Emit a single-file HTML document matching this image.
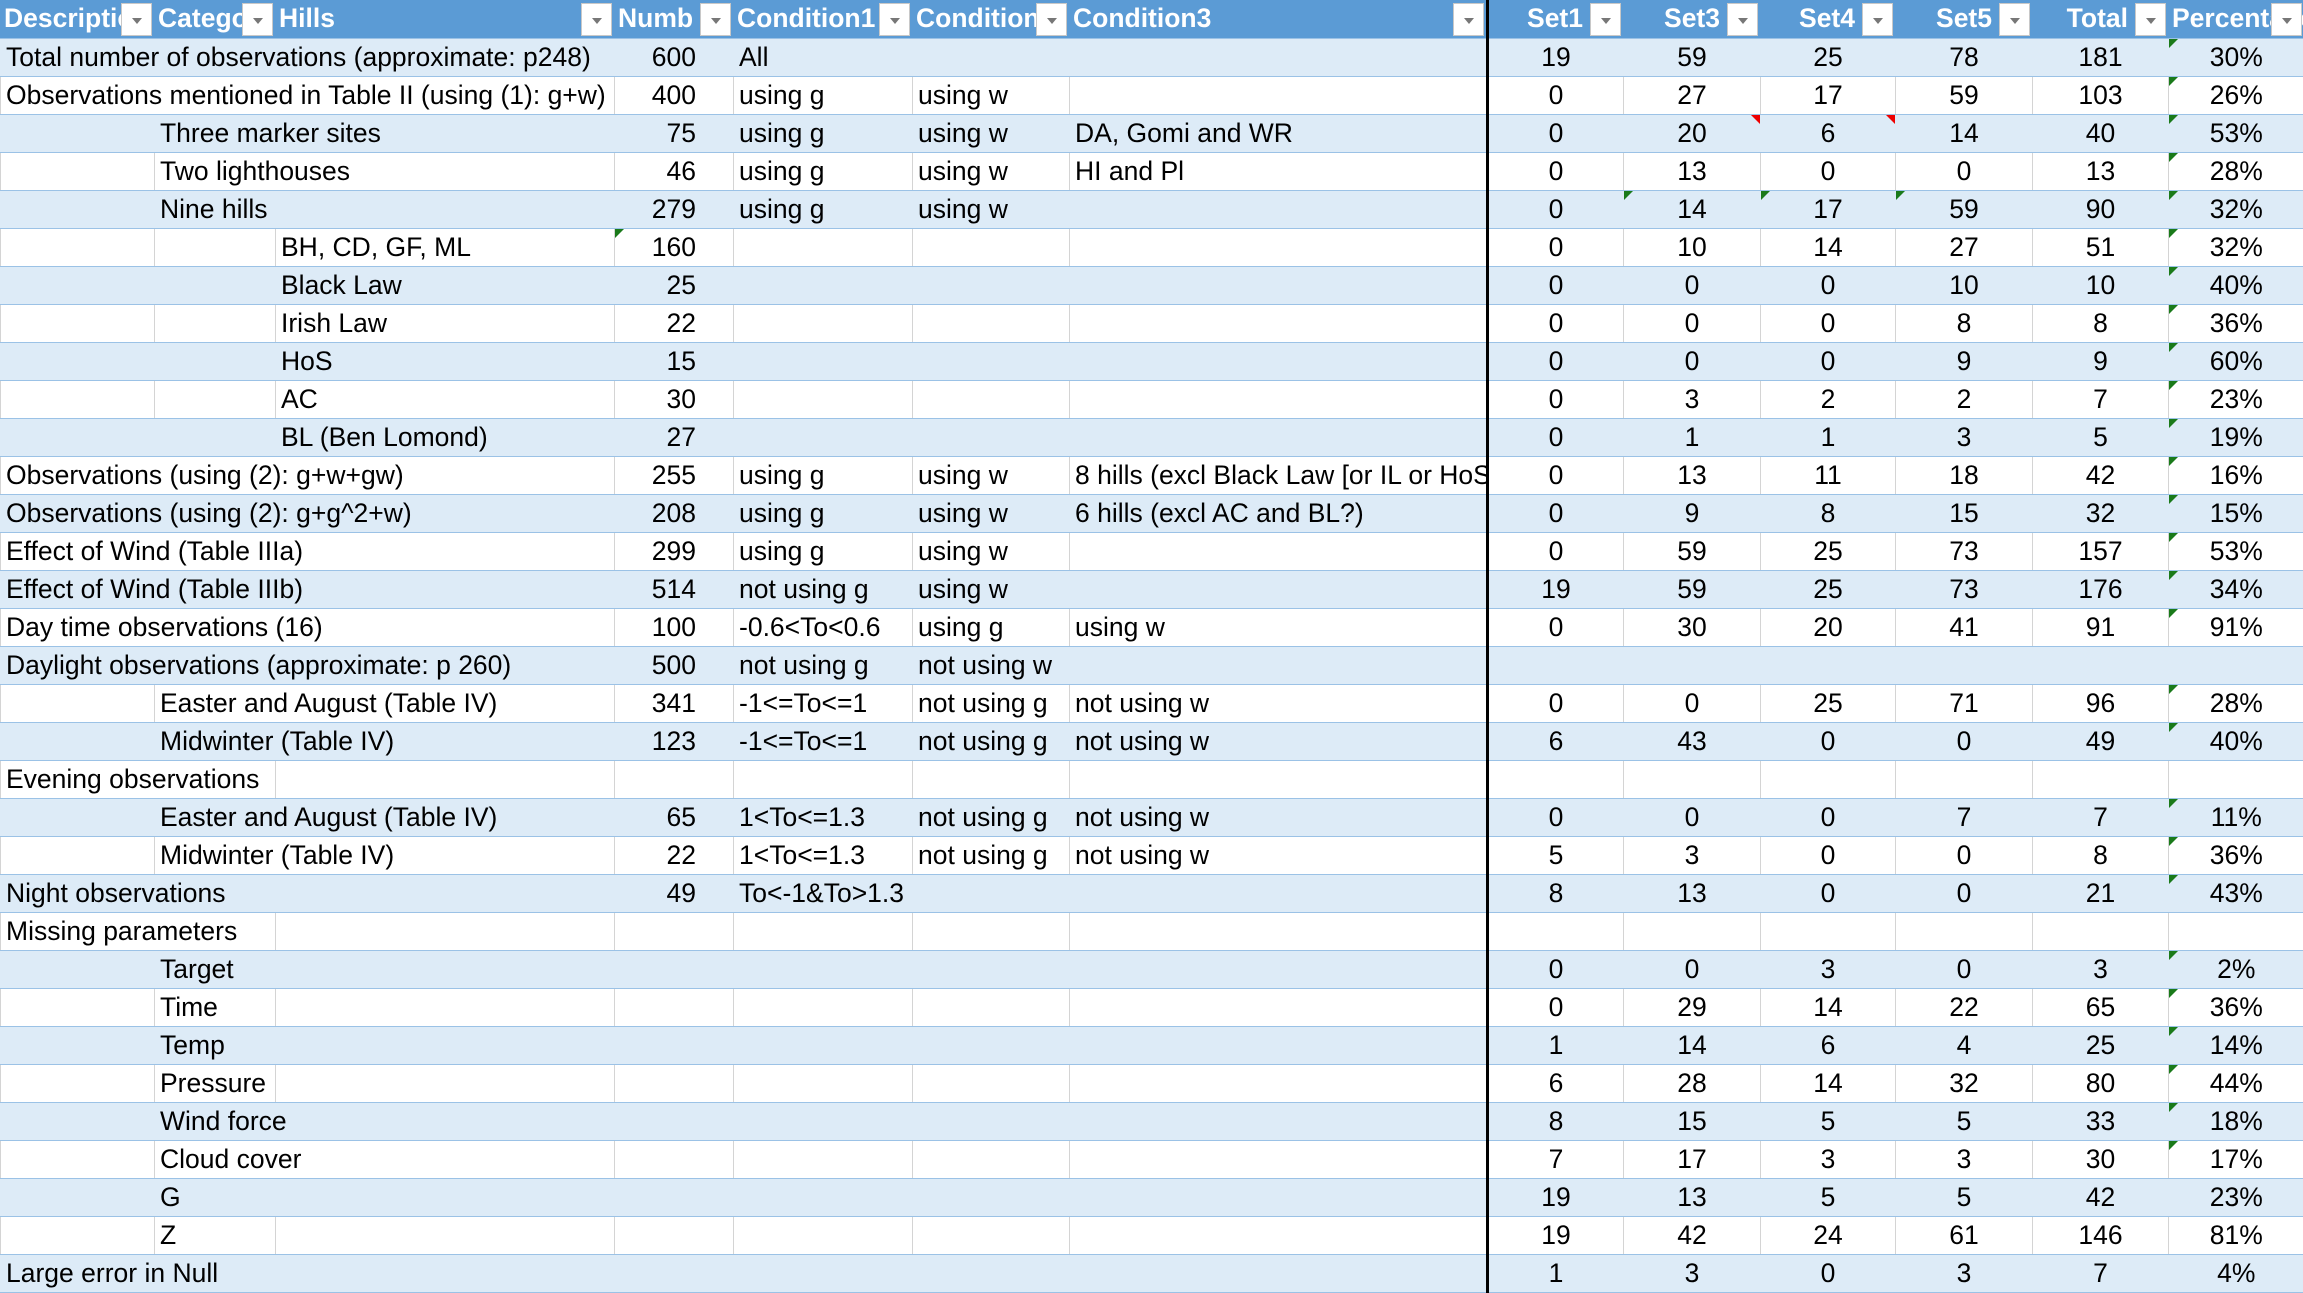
<!DOCTYPE html>
<html><head><meta charset="utf-8">
<style>
*{margin:0;padding:0;box-sizing:border-box}
body{width:2303px;height:1293px;overflow:hidden;background:#fff;font-family:"Liberation Sans",Arial,sans-serif;font-size:26.5px;color:#000}
table{border-collapse:collapse;table-layout:fixed;width:2303px}
td{height:38px;padding:0 0 0 5px;white-space:nowrap;overflow:hidden;border-bottom:1px solid #9BC2E6;border-left:1px solid #D4D4D4;position:relative;line-height:37px;vertical-align:middle}
tr.b td{background:#DDEBF7;border-left-color:#DDEBF7}
tr.h td{background:#5B9BD5;color:#fff;font-weight:bold;border-left:1px solid #5B9BD5;border-bottom:1px solid #9BC2E6;padding-left:3px}
td.n{text-align:right;padding-right:37px}
td.c{text-align:center;padding:0}
td.k{border-left:3px solid #000 !important}
tr.h td.r{text-align:right;padding-right:40px}
.d{position:absolute;right:2px;top:3px;width:31px;height:33px;background:#fff;border:1px solid #c8c8c8}
.d:after{content:"";position:absolute;left:10px;top:14px;border-left:5px solid transparent;border-right:5px solid transparent;border-top:6px solid #777}
.g:before{content:"";position:absolute;left:0;top:0;border-top:9px solid #1a7a1a;border-right:9px solid transparent}
.rd:after{content:"";position:absolute;right:0;top:0;border-top:9px solid #e00;border-left:9px solid transparent}
</style></head><body>
<table>
<colgroup><col style="width:154px"><col style="width:121px"><col style="width:339px"><col style="width:119px"><col style="width:179px"><col style="width:157px"><col style="width:418px"><col style="width:136px"><col style="width:137px"><col style="width:135px"><col style="width:137px"><col style="width:136px"><col style="width:135px"></colgroup>
<tr class="h"><td>Descriptio<span class="d"></span></td><td>Catego<span class="d"></span></td><td>Hills<span class="d"></span></td><td>Numb<span class="d"></span></td><td>Condition1<span class="d"></span></td><td>Condition<span class="d"></span></td><td>Condition3<span class="d"></span></td><td class="k r">Set1<span class="d"></span></td><td class="r">Set3<span class="d"></span></td><td class="r">Set4<span class="d"></span></td><td class="r">Set5<span class="d"></span></td><td class="r">Total<span class="d"></span></td><td>Percentage<span class="d"></span></td></tr>
<tr class="b"><td colspan="3">Total number of observations (approximate: p248)</td><td class="n">600</td><td>All</td><td></td><td></td><td class="c k">19</td><td class="c">59</td><td class="c">25</td><td class="c">78</td><td class="c">181</td><td class="c g">30%</td></tr>
<tr><td colspan="3">Observations mentioned in Table II (using (1): g+w)</td><td class="n">400</td><td>using g</td><td>using w</td><td></td><td class="c k">0</td><td class="c">27</td><td class="c">17</td><td class="c">59</td><td class="c">103</td><td class="c g">26%</td></tr>
<tr class="b"><td></td><td colspan="2">Three marker sites</td><td class="n">75</td><td>using g</td><td>using w</td><td>DA, Gomi and WR</td><td class="c k">0</td><td class="c rd">20</td><td class="c rd">6</td><td class="c">14</td><td class="c">40</td><td class="c g">53%</td></tr>
<tr><td></td><td colspan="2">Two lighthouses</td><td class="n">46</td><td>using g</td><td>using w</td><td>HI and Pl</td><td class="c k">0</td><td class="c">13</td><td class="c">0</td><td class="c">0</td><td class="c">13</td><td class="c g">28%</td></tr>
<tr class="b"><td></td><td colspan="2">Nine hills</td><td class="n">279</td><td>using g</td><td>using w</td><td></td><td class="c k">0</td><td class="c g">14</td><td class="c g">17</td><td class="c g">59</td><td class="c">90</td><td class="c g">32%</td></tr>
<tr><td></td><td></td><td>BH, CD, GF, ML</td><td class="n g">160</td><td></td><td></td><td></td><td class="c k">0</td><td class="c">10</td><td class="c">14</td><td class="c">27</td><td class="c">51</td><td class="c g">32%</td></tr>
<tr class="b"><td></td><td></td><td>Black Law</td><td class="n">25</td><td></td><td></td><td></td><td class="c k">0</td><td class="c">0</td><td class="c">0</td><td class="c">10</td><td class="c">10</td><td class="c g">40%</td></tr>
<tr><td></td><td></td><td>Irish Law</td><td class="n">22</td><td></td><td></td><td></td><td class="c k">0</td><td class="c">0</td><td class="c">0</td><td class="c">8</td><td class="c">8</td><td class="c g">36%</td></tr>
<tr class="b"><td></td><td></td><td>HoS</td><td class="n">15</td><td></td><td></td><td></td><td class="c k">0</td><td class="c">0</td><td class="c">0</td><td class="c">9</td><td class="c">9</td><td class="c g">60%</td></tr>
<tr><td></td><td></td><td>AC</td><td class="n">30</td><td></td><td></td><td></td><td class="c k">0</td><td class="c">3</td><td class="c">2</td><td class="c">2</td><td class="c">7</td><td class="c g">23%</td></tr>
<tr class="b"><td></td><td></td><td>BL (Ben Lomond)</td><td class="n">27</td><td></td><td></td><td></td><td class="c k">0</td><td class="c">1</td><td class="c">1</td><td class="c">3</td><td class="c">5</td><td class="c g">19%</td></tr>
<tr><td colspan="3">Observations (using (2): g+w+gw)</td><td class="n">255</td><td>using g</td><td>using w</td><td>8 hills (excl Black Law [or IL or HoS]</td><td class="c k">0</td><td class="c">13</td><td class="c">11</td><td class="c">18</td><td class="c">42</td><td class="c g">16%</td></tr>
<tr class="b"><td colspan="3">Observations (using (2): g+g^2+w)</td><td class="n">208</td><td>using g</td><td>using w</td><td>6 hills (excl AC and BL?)</td><td class="c k">0</td><td class="c">9</td><td class="c">8</td><td class="c">15</td><td class="c">32</td><td class="c g">15%</td></tr>
<tr><td colspan="3">Effect of Wind (Table IIIa)</td><td class="n">299</td><td>using g</td><td>using w</td><td></td><td class="c k">0</td><td class="c">59</td><td class="c">25</td><td class="c">73</td><td class="c">157</td><td class="c g">53%</td></tr>
<tr class="b"><td colspan="3">Effect of Wind (Table IIIb)</td><td class="n">514</td><td>not using g</td><td>using w</td><td></td><td class="c k">19</td><td class="c">59</td><td class="c">25</td><td class="c">73</td><td class="c">176</td><td class="c g">34%</td></tr>
<tr><td colspan="3">Day time observations (16)</td><td class="n">100</td><td>-0.6&lt;To&lt;0.6</td><td>using g</td><td>using w</td><td class="c k">0</td><td class="c">30</td><td class="c">20</td><td class="c">41</td><td class="c">91</td><td class="c g">91%</td></tr>
<tr class="b"><td colspan="3">Daylight observations (approximate: p 260)</td><td class="n">500</td><td>not using g</td><td>not using w</td><td></td><td class="c k"></td><td></td><td></td><td></td><td></td><td></td></tr>
<tr><td></td><td colspan="2">Easter and August (Table IV)</td><td class="n">341</td><td>-1&lt;=To&lt;=1</td><td>not using g</td><td>not using w</td><td class="c k">0</td><td class="c">0</td><td class="c">25</td><td class="c">71</td><td class="c">96</td><td class="c g">28%</td></tr>
<tr class="b"><td></td><td colspan="2">Midwinter (Table IV)</td><td class="n">123</td><td>-1&lt;=To&lt;=1</td><td>not using g</td><td>not using w</td><td class="c k">6</td><td class="c">43</td><td class="c">0</td><td class="c">0</td><td class="c">49</td><td class="c g">40%</td></tr>
<tr><td colspan="2">Evening observations</td><td></td><td class="n"></td><td></td><td></td><td></td><td class="c k"></td><td></td><td></td><td></td><td></td><td></td></tr>
<tr class="b"><td></td><td colspan="2">Easter and August (Table IV)</td><td class="n">65</td><td>1&lt;To&lt;=1.3</td><td>not using g</td><td>not using w</td><td class="c k">0</td><td class="c">0</td><td class="c">0</td><td class="c">7</td><td class="c">7</td><td class="c g">11%</td></tr>
<tr><td></td><td colspan="2">Midwinter (Table IV)</td><td class="n">22</td><td>1&lt;To&lt;=1.3</td><td>not using g</td><td>not using w</td><td class="c k">5</td><td class="c">3</td><td class="c">0</td><td class="c">0</td><td class="c">8</td><td class="c g">36%</td></tr>
<tr class="b"><td colspan="2">Night observations</td><td></td><td class="n">49</td><td>To&lt;-1&amp;To&gt;1.3</td><td></td><td></td><td class="c k">8</td><td class="c">13</td><td class="c">0</td><td class="c">0</td><td class="c">21</td><td class="c g">43%</td></tr>
<tr><td colspan="2">Missing parameters</td><td></td><td class="n"></td><td></td><td></td><td></td><td class="c k"></td><td></td><td></td><td></td><td></td><td></td></tr>
<tr class="b"><td></td><td>Target</td><td></td><td></td><td></td><td></td><td></td><td class="c k">0</td><td class="c">0</td><td class="c">3</td><td class="c">0</td><td class="c">3</td><td class="c g">2%</td></tr>
<tr><td></td><td>Time</td><td></td><td></td><td></td><td></td><td></td><td class="c k">0</td><td class="c">29</td><td class="c">14</td><td class="c">22</td><td class="c">65</td><td class="c g">36%</td></tr>
<tr class="b"><td></td><td>Temp</td><td></td><td></td><td></td><td></td><td></td><td class="c k">1</td><td class="c">14</td><td class="c">6</td><td class="c">4</td><td class="c">25</td><td class="c g">14%</td></tr>
<tr><td></td><td>Pressure</td><td></td><td></td><td></td><td></td><td></td><td class="c k">6</td><td class="c">28</td><td class="c">14</td><td class="c">32</td><td class="c">80</td><td class="c g">44%</td></tr>
<tr class="b"><td></td><td colspan="2">Wind force</td><td></td><td></td><td></td><td></td><td class="c k">8</td><td class="c">15</td><td class="c">5</td><td class="c">5</td><td class="c">33</td><td class="c g">18%</td></tr>
<tr><td></td><td colspan="2">Cloud cover</td><td></td><td></td><td></td><td></td><td class="c k">7</td><td class="c">17</td><td class="c">3</td><td class="c">3</td><td class="c">30</td><td class="c g">17%</td></tr>
<tr class="b"><td></td><td>G</td><td></td><td></td><td></td><td></td><td></td><td class="c k">19</td><td class="c">13</td><td class="c">5</td><td class="c">5</td><td class="c">42</td><td class="c">23%</td></tr>
<tr><td></td><td>Z</td><td></td><td></td><td></td><td></td><td></td><td class="c k">19</td><td class="c">42</td><td class="c">24</td><td class="c">61</td><td class="c">146</td><td class="c">81%</td></tr>
<tr class="b"><td colspan="2">Large error in Null</td><td></td><td></td><td></td><td></td><td></td><td class="c k">1</td><td class="c">3</td><td class="c">0</td><td class="c">3</td><td class="c">7</td><td class="c">4%</td></tr>
</table>
</body></html>
